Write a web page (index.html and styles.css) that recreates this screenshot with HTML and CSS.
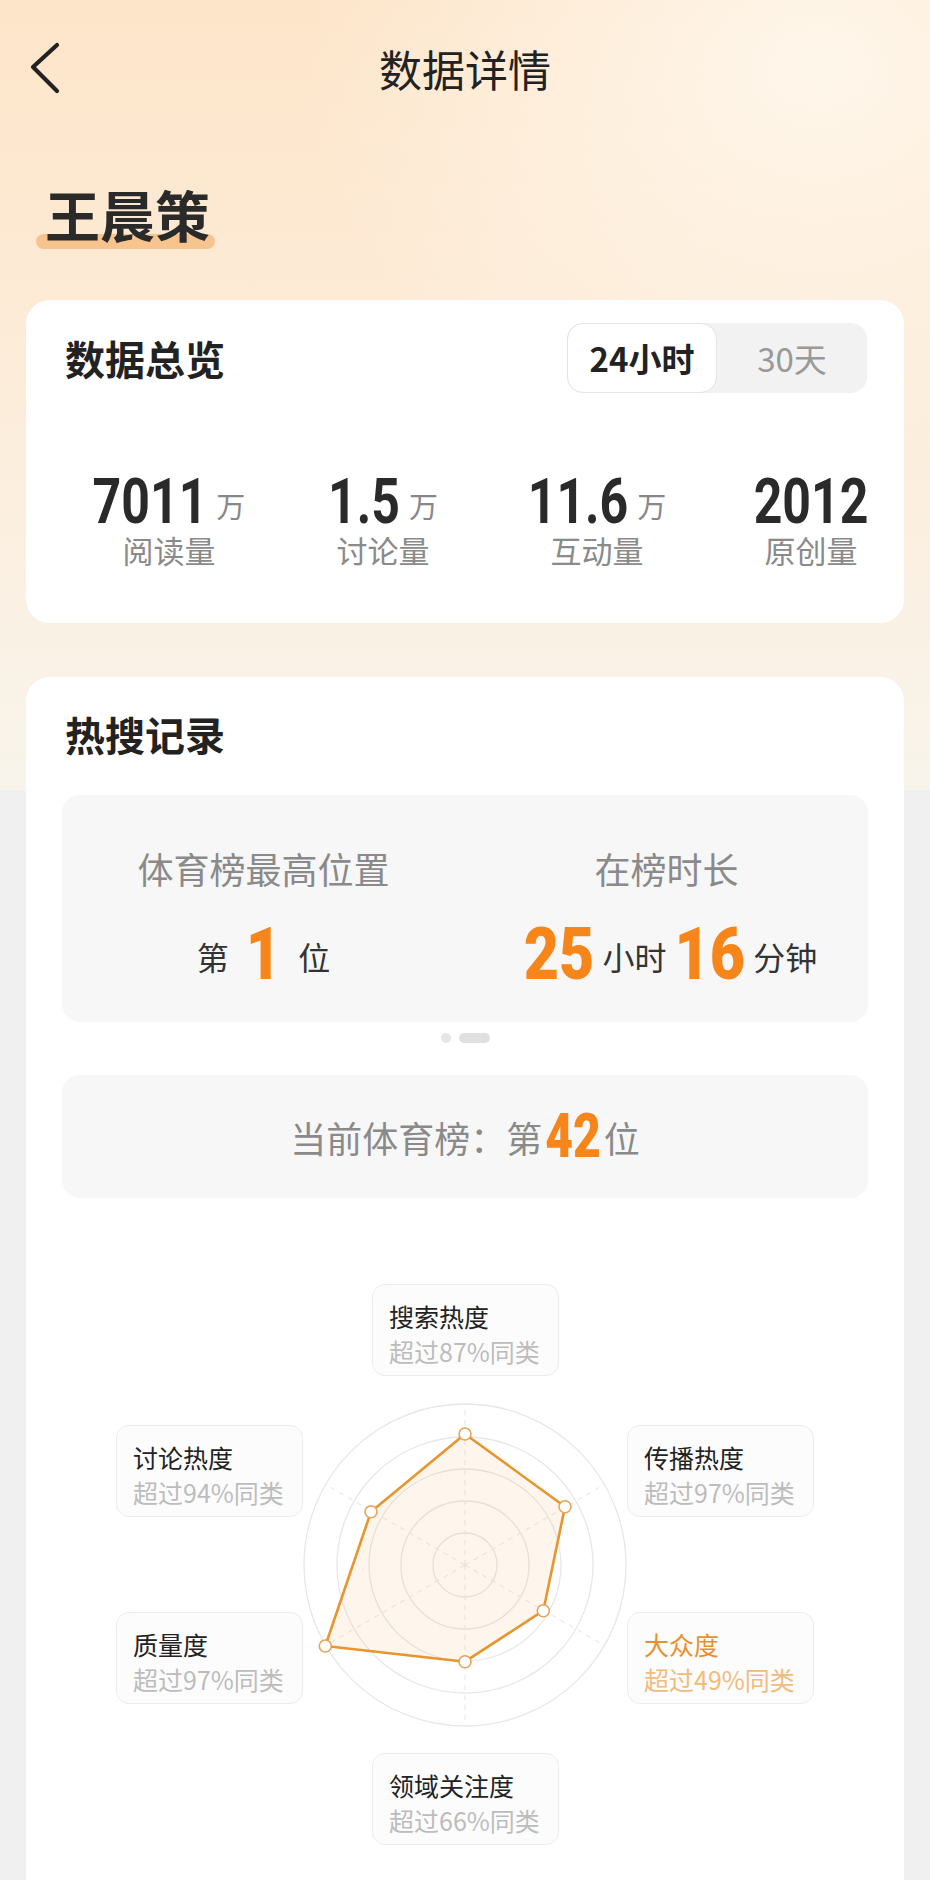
FILE: index.html
```html
<!DOCTYPE html>
<html lang="zh-CN">
<head>
<meta charset="utf-8">
<title>数据详情</title>
<link rel="stylesheet" href="styles.css">
</head>
<body>
<div class="page">
  <header class="topbar">
    <svg class="back" width="40" height="56" viewBox="0 0 40 56"><polyline points="32,5 8,27 32,51"/></svg>
    <h1 class="title">数据详情</h1>
    <span class="spacer"></span>
  </header>

  <div class="name-row"><span class="name">王晨策</span></div>

  <section class="card overview">
    <div class="card-head">
      <h2 class="card-title">数据总览</h2>
      <div class="toggle">
        <span class="seg active">24小时</span>
        <span class="seg">30天</span>
      </div>
    </div>
    <div class="stats">
      <div class="stat"><div class="val"><span class="num">7011</span><span class="unit">万</span></div><div class="lbl">阅读量</div></div>
      <div class="stat"><div class="val"><span class="num">1.5</span><span class="unit">万</span></div><div class="lbl">讨论量</div></div>
      <div class="stat"><div class="val"><span class="num">11.6</span><span class="unit">万</span></div><div class="lbl">互动量</div></div>
      <div class="stat"><div class="val"><span class="num">2012</span></div><div class="lbl">原创量</div></div>
    </div>
  </section>

  <section class="card hot">
    <h2 class="card-title hot-title">热搜记录</h2>
    <div class="record">
      <div class="rec-col">
        <div class="rec-lbl">体育榜最高位置</div>
        <div class="rec-val"><span class="small">第</span><span class="big gap">1</span><span class="small">位</span></div>
      </div>
      <div class="rec-col">
        <div class="rec-lbl">在榜时长</div>
        <div class="rec-val"><span class="big">25</span><span class="small">小时</span><span class="big">16</span><span class="small">分钟</span></div>
      </div>
    </div>
    <div class="pager"><span class="dot"></span><span class="bar"></span></div>
    <div class="current"><span>当前体育榜：第</span><span class="cur-num">42</span><span>位</span></div>

    <div class="radar">
      <svg class="chart" width="340" height="340" viewBox="0 0 340 340">
        <g class="rings">
          <circle cx="170" cy="170" r="161"/>
          <circle cx="170" cy="170" r="128"/>
          <circle cx="170" cy="170" r="96"/>
          <circle cx="170" cy="170" r="64"/>
          <circle cx="170" cy="170" r="32"/>
        </g>
        <g class="axes">
          <line x1="170" y1="170" x2="170" y2="9"/>
          <line x1="170" y1="170" x2="309.4" y2="89.5"/>
          <line x1="170" y1="170" x2="309.4" y2="250.5"/>
          <line x1="170" y1="170" x2="170" y2="331"/>
          <line x1="170" y1="170" x2="30.6" y2="250.5"/>
          <line x1="170" y1="170" x2="30.6" y2="89.5"/>
        </g>
        <polygon class="area" points="170,39 270,111.7 248.3,215.7 170,266.7 30.3,251 76,116.7"/>
        <g class="pts">
          <circle cx="170" cy="39" r="6"/>
          <circle cx="270" cy="111.7" r="6"/>
          <circle cx="248.3" cy="215.7" r="6"/>
          <circle cx="170" cy="266.7" r="6"/>
          <circle cx="30.3" cy="251" r="6"/>
          <circle cx="76" cy="116.7" r="6"/>
        </g>
      </svg>
      <div class="tag t-top"><div class="tag-name">搜索热度</div><div class="tag-sub">超过87%同类</div></div>
      <div class="tag t-ul"><div class="tag-name">讨论热度</div><div class="tag-sub">超过94%同类</div></div>
      <div class="tag t-ur"><div class="tag-name">传播热度</div><div class="tag-sub">超过97%同类</div></div>
      <div class="tag t-ll"><div class="tag-name">质量度</div><div class="tag-sub">超过97%同类</div></div>
      <div class="tag t-lr hl"><div class="tag-name">大众度</div><div class="tag-sub">超过49%同类</div></div>
      <div class="tag t-bot"><div class="tag-name">领域关注度</div><div class="tag-sub">超过66%同类</div></div>
    </div>
  </section>
</div>
</body>
</html>
```

FILE: styles.css
```css
* { box-sizing: border-box; }

html, body {
  margin: 0;
  padding: 0;
}

body {
  background: #f0f0f0;
  font-family: "Noto Sans CJK SC", "Noto Sans", sans-serif;
  color: #222;
}

.page {
  width: 930px;
  min-height: 1880px;
  overflow: hidden;
  background:
    radial-gradient(ellipse 520px 420px at 88% 8%, rgba(255, 249, 240, 0.85), rgba(255, 249, 240, 0) 100%) top / 100% 790px no-repeat,
    linear-gradient(180deg, #fde5c9 0px, #fdead4 260px, #fbf0e2 560px, #f8f4eb 790px) top / 100% 790px no-repeat,
    #f0f0f0;
}

/* header */
.topbar {
  height: 136px;
  display: grid;
  grid-template-columns: 1fr auto 1fr;
  align-items: center;
}

.back {
  margin-left: 25px;
  fill: none;
  stroke: #222;
  stroke-width: 4.2;
  stroke-linecap: round;
  stroke-linejoin: round;
}

.title {
  margin: 0;
  font-size: 43px;
  line-height: 1;
  font-weight: 400;
  color: #222;
}

/* name */
.name-row {
  margin-top: 50px;
  padding-left: 45px;
  height: 55px;
}

.name {
  position: relative;
  display: inline-block;
  font-size: 55px;
  line-height: 55px;
  font-weight: 700;
  color: #2a2a2a;
  z-index: 0;
}

.name::after {
  content: "";
  position: absolute;
  left: -9px;
  right: -5px;
  top: 48px;
  height: 15px;
  border-radius: 8px;
  background: #f7c48e;
  z-index: -1;
}

/* cards */
.card {
  margin: 0 26px;
  background: #fff;
  border-radius: 24px;
}

.overview {
  margin-top: 59px;
  padding-top: 23px;
  padding-bottom: 58px;
}

.card-head {
  display: flex;
  align-items: center;
  justify-content: space-between;
  height: 70px;
  margin: 0 37px 0 39px;
}

.card-title {
  margin: 0;
  font-size: 40px;
  line-height: 40px;
  font-weight: 700;
  color: #222;
}

.toggle {
  display: flex;
  width: 300px;
  height: 70px;
  background: #f2f2f2;
  border-radius: 16px;
}

.seg {
  width: 150px;
  display: flex;
  align-items: center;
  justify-content: center;
  font-size: 33px;
  color: #999;
}

.seg.active {
  background: #fff;
  border: 1.5px solid #e4e4e4;
  border-radius: 16px;
  color: #222;
  font-weight: 700;
}

.stats {
  display: grid;
  grid-template-columns: repeat(4, 214px);
  padding-left: 36px;
  margin-top: 83px;
}

.stat {
  display: flex;
  flex-direction: column;
  align-items: center;
}

.val {
  display: flex;
  align-items: baseline;
  height: 58px;
}

.num {
  display: inline-block;
  font-family: "Roboto", "Liberation Sans", sans-serif;
  font-size: 50px;
  line-height: 50px;
  font-weight: 700;
  color: #2a2a2a;
  transform: scaleY(1.27);
  transform-origin: 50% 50%;
}

.unit {
  margin-left: 9px;
  font-size: 29px;
  color: #888;
}

.lbl {
  font-size: 31px;
  line-height: 31px;
  color: #8a8a8a;
}

/* hot card */
.hot {
  margin-top: 54px;
  padding-top: 37px;
  padding-bottom: 40px;
}

.hot-title {
  margin-left: 39px;
}

.record {
  margin: 41px 36px 0;
  height: 227px;
  background: #f7f7f7;
  border-radius: 18px;
  display: grid;
  grid-template-columns: 1fr 1fr;
  padding-top: 55px;
}

.rec-col {
  display: flex;
  flex-direction: column;
  align-items: center;
}

.rec-lbl {
  font-size: 36px;
  line-height: 36px;
  color: #8a8a8a;
}

.rec-val {
  margin-top: 34px;
  display: flex;
  align-items: center;
  height: 71px;
}

.small {
  font-size: 32px;
  line-height: 32px;
  color: #333;
}

.big {
  display: inline-block;
  font-family: "Roboto", "Liberation Sans", sans-serif;
  font-size: 61px;
  line-height: 61px;
  font-weight: 900;
  color: #f7861a;
  margin: 0 8px;
  transform: scaleY(1.17);
  transform-origin: 50% 50%;
}

.big.gap {
  margin: 0 17px;
}

.pager {
  display: flex;
  justify-content: center;
  align-items: center;
  gap: 8px;
  margin-top: 11px;
  height: 10px;
}

.dot {
  width: 10px;
  height: 10px;
  border-radius: 50%;
  background: #e6e6e6;
}

.bar {
  width: 31px;
  height: 10px;
  border-radius: 5px;
  background: #e0e0e0;
}

.current {
  margin: 32px 36px 0;
  height: 123px;
  background: #f7f7f7;
  border-radius: 18px;
  display: flex;
  align-items: center;
  justify-content: center;
  font-size: 36px;
  line-height: 36px;
  color: #8a8a8a;
}

.cur-num {
  display: inline-block;
  font-family: "Roboto", "Liberation Sans", sans-serif;
  font-size: 48px;
  line-height: 48px;
  font-weight: 900;
  color: #f7861a;
  margin: 0 3px;
  transform: scaleY(1.26);
  transform-origin: 50% 50%;
}

/* radar diagram (free canvas) */
.radar {
  position: relative;
  margin-top: 86px;
  height: 600px;
}

.chart {
  position: absolute;
  left: 269px;
  top: 111px;
}

.rings circle {
  fill: none;
  stroke: #e7e7e7;
  stroke-width: 1.3;
}

.axes line {
  stroke: #ebebeb;
  stroke-width: 1.3;
  stroke-dasharray: 5 5;
}

.area {
  fill: rgba(250, 160, 80, 0.1);
  stroke: #e8952e;
  stroke-width: 2.6;
  stroke-linejoin: round;
}

.pts circle {
  fill: #fff;
  stroke: #e6a35a;
  stroke-width: 1.6;
}

.tag {
  position: absolute;
  width: 187px;
  height: 92px;
  padding: 14px 16px;
  background: #fcfcfc;
  border: 1.5px solid #ececec;
  border-radius: 13px;
  font-size: 25px;
  line-height: 35px;
}

.tag-name {
  color: #222;
}

.tag-sub {
  color: #bcbcbc;
}

.tag.hl .tag-name { color: #e8912b; }
.tag.hl .tag-sub { color: #f1bb7c; }

.t-top { left: 346px; top: 0; }
.t-ul  { left: 90px;  top: 141px; }
.t-ur  { left: 601px; top: 141px; }
.t-ll  { left: 90px;  top: 328px; }
.t-lr  { left: 601px; top: 328px; }
.t-bot { left: 346px; top: 469px; }
```
